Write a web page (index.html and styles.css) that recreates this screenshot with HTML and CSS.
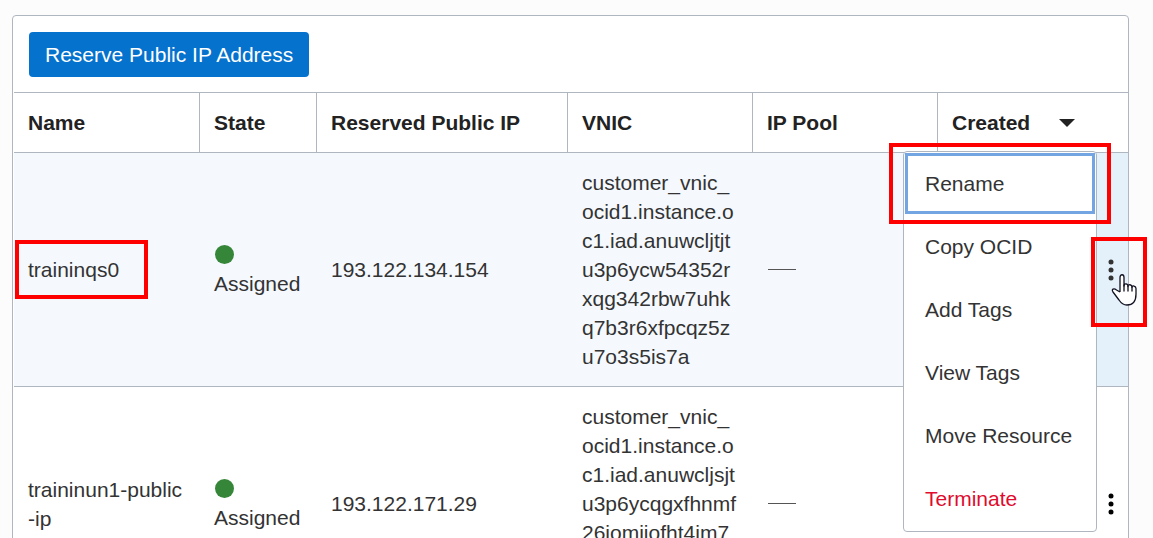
FILE: index.html
```html
<!DOCTYPE html>
<html lang="en">
<head>
<meta charset="utf-8">
<title>Reserved Public IPs</title>
<link rel="stylesheet" href="styles.css">
</head>
<body>
<main class="panel">
  <div class="toolbar">
    <button class="primary" type="button">Reserve Public IP Address</button>
  </div>
  <table class="ip-table">
    <colgroup>
      <col class="col-name"><col class="col-state"><col class="col-ip"><col class="col-vnic"><col class="col-pool"><col class="col-created"><col class="col-actions">
    </colgroup>
    <thead>
      <tr>
        <th scope="col">Name</th>
        <th scope="col">State</th>
        <th scope="col">Reserved Public IP</th>
        <th scope="col">VNIC</th>
        <th scope="col">IP Pool</th>
        <th scope="col" colspan="2"><span class="sort">Created <svg width="16" height="8" viewBox="0 0 16 8" aria-hidden="true"><path d="M0 0h16L8 8z" fill="#222"/></svg></span></th>
      </tr>
    </thead>
    <tbody>
      <tr class="active">
        <td><span class="marked">traininqs0<i class="callout callout-name"></i></span></td>
        <td><span class="state"><i class="dot"></i>Assigned</span></td>
        <td>193.122.134.154</td>
        <td>customer_vnic_ocid1.instance.oc1.iad.anuwcljtjtu3p6ycw54352rxqg342rbw7uhkq7b3r6xfpcqz5zu7o3s5is7a</td>
        <td><span class="none"></span></td>
        <td></td>
        <td class="actions">
          <button class="kebab" type="button" aria-label="Actions"><svg width="8" height="22" viewBox="0 0 8 22"><g fill="#333"><circle cx="4" cy="3" r="2.5"/><circle cx="4" cy="11" r="2.5"/><circle cx="4" cy="19" r="2.5"/></g></svg></button>
          <div class="menu" role="menu">
            <button class="focused" type="button" role="menuitem">Rename<i class="callout callout-rename"></i></button>
            <button type="button" role="menuitem">Copy OCID</button>
            <button type="button" role="menuitem">Add Tags</button>
            <button type="button" role="menuitem">View Tags</button>
            <button type="button" role="menuitem">Move Resource</button>
            <button class="danger" type="button" role="menuitem">Terminate</button>
          </div>
          <i class="callout callout-actions"></i>
          <svg class="pointer" width="28" height="34" viewBox="0 0 28 34" aria-hidden="true"><path d="M9 19V4.500C9 .8 13 .8 13 4.500V13c0-3 4-2.700 4 .5 0-2.700 4-2.200 4 .8 0-2.300 4-1.500 4 1.200V21c0 7-3 11-9 11-4 0-6-2-8-5L2 19c-2-3 1-4 3.500-2L9 19" fill="#fff" stroke="#111122" stroke-width="1.300" stroke-linejoin="round"/><path d="M13 12v6M17 13.500V18M21 14.500V18" fill="none" stroke="#111122" stroke-width="1.300" stroke-linecap="round"/></svg>
        </td>
      </tr>
      <tr>
        <td>traininun1-public-ip</td>
        <td><span class="state"><i class="dot"></i>Assigned</span></td>
        <td>193.122.171.29</td>
        <td>customer_vnic_ocid1.instance.oc1.iad.anuwcljsjtu3p6ycqgxfhnmf<br>26iomiiofht4im7<br>&nbsp;<br>&nbsp;</td>
        <td><span class="none"></span></td>
        <td></td>
        <td class="actions">
          <button class="kebab" type="button" aria-label="Actions"><svg width="8" height="22" viewBox="0 0 8 22"><g fill="#000"><circle cx="4" cy="3" r="2.5"/><circle cx="4" cy="11" r="2.5"/><circle cx="4" cy="19" r="2.5"/></g></svg></button>
        </td>
      </tr>
    </tbody>
  </table>
</main>
</body>
</html>
```
FILE: styles.css
```css
* { box-sizing: border-box; }
html { overflow: hidden; }
body {
  margin: 0;
  padding: 15px 24px 24px 12px;
  background: #fcfcfc;
  color: #333;
  font: 21px/29px "Liberation Sans", Arial, sans-serif;
}
button { font: inherit; cursor: pointer; }
.panel {
  background: #fff;
  border: 1px solid #afb6c0;
  border-radius: 4px;
}
.toolbar { padding: 16px 16px 15px; }
.primary {
  display: block;
  padding: 8px 16px;
  border: 0;
  border-radius: 4px;
  background: #0572ce;
  color: #fff;
}
.ip-table {
  width: 100%;
  padding-left: 1px;
  table-layout: fixed;
  border-collapse: separate;
  border-spacing: 0;
}
.col-name { width: 186px; }
.col-state { width: 117px; }
.col-ip { width: 251px; }
.col-vnic, .col-pool { width: 185px; }
.col-actions { width: 34px; }
th {
  padding: 15px 14px;
  border: 1px solid #afb6c0;
  border-width: 1px 1px 1px 0;
  color: #222;
  font-weight: bold;
  text-align: left;
}
th:last-child { border-right: 0; }
.sort { display: flex; align-items: center; gap: 29px; }
td {
  padding: 15px 14px;
  border-bottom: 1px solid #afb6c0;
  vertical-align: middle;
  word-break: break-all;
}
.active td { background: #f5f9fe; }
.active .actions { background: #e4f1fa; }
.state { display: flex; flex-direction: column; }
.dot {
  width: 19px;
  height: 19px;
  margin: 4px 1px 5px;
  border-radius: 50%;
  background: #368639;
}
.none { display: block; width: 28px; height: 1px; margin-left: 1px; background: #555; }
.actions { position: relative; padding: 0; }
.kebab {
  display: flex;
  align-items: center;
  justify-content: center;
  width: 100%;
  height: 44px;
  padding: 0;
  border: 0;
  background: none;
}
.menu {
  position: absolute;
  z-index: 1;
  top: -2px;
  right: 31px;
  display: flex;
  flex-direction: column;
  padding-bottom: 1px;
  border: 1px solid #afb6c0;
  border-radius: 4px;
  background: #fff;
}
.menu button {
  position: relative;
  width: 192px;
  padding: 17px 21px;
  border: 0;
  background: none;
  color: #333;
  text-align: left;
  white-space: nowrap;
}
.menu .focused { outline: 3px solid #72a5e1; outline-offset: -4px; }
.menu .danger { color: #e00b2d; }
.marked { position: relative; display: inline-block; }
.callout {
  position: absolute;
  z-index: 2;
  border: 4px solid #fe0000;
  pointer-events: none;
}
.callout-name { inset: -15px -29px -15px -13px; }
.callout-rename { inset: -9px -15px -9px -15px; }
.callout-actions { top: 84px; right: -19px; width: 56px; height: 90px; }
.pointer { position: absolute; z-index: 3; top: 120px; right: -11px; }
```
